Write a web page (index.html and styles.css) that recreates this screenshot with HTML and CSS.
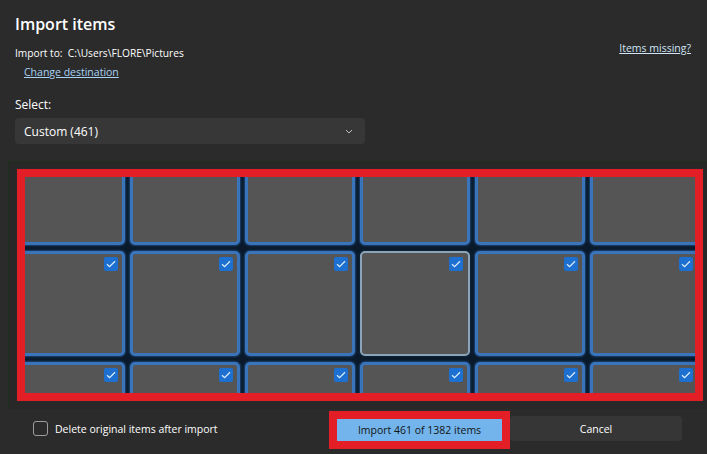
FILE: index.html
```html
<!DOCTYPE html>
<html lang="en">
<head>
    <meta charset="UTF-8">
    <title>Import items</title>
    <link rel="stylesheet" href="styles.css">
</head>
<body>
    <div class="dialog">
        <div class="head">
            <h1 class="title">Import items</h1>

            <div class="dest-row">
                <div class="dest">
                    <p class="import-to">Import to:&nbsp; C:\Users\FLORE\Pictures</p>
                    <a class="link change" href="#">Change destination</a>
                </div>
                <a class="link missing" href="#">Items missing?</a>
            </div>

            <div class="select-label">Select:</div>
            <div class="dropdown">
                <span>Custom (461)</span>
                <svg class="chevron" width="8" height="5" viewBox="0 0 8 5">
                    <path d="M1 1l3 3 3-3" fill="none" stroke="#bdbdbd" stroke-width="1"/>
                </svg>
            </div>
        </div>

        <div class="panel">
            <div class="frame">
                <div class="viewport">
                    <div class="grid" id="grid"></div>
                </div>
            </div>
        </div>

        <div class="footer">
            <label class="keep">
                <span class="box"></span>
                <span>Delete original items after import</span>
            </label>
            <div class="buttons">
                <div class="mark">
                    <button class="btn primary">Import 461 of 1382 items</button>
                </div>
                <button class="btn secondary">Cancel</button>
            </div>
        </div>
    </div>

    <script>
        // 3 rows x 6 columns of selected thumbnails, one in hover state
        const grid = document.getElementById('grid');
        for (let i = 0; i < 18; i++) {
            const tile = document.createElement('div');
            tile.className = 'tile' + (i === 9 ? ' hover' : '');
            tile.innerHTML = '<span class="check"><svg width="10" height="8" viewBox="0 0 10 8">' +
                '<path d="M1 4.2l2.6 2.5L9 1.2" fill="none" stroke="#d8ecff" stroke-width="1.3"/></svg></span>';
            grid.appendChild(tile);
        }
    </script>
</body>
</html>
```

FILE: styles.css
```css
body {
    margin: 0;
    background: #2b2b2b;
    color: #ffffff;
    font-family: "Open Sans", "Noto Sans", sans-serif;
    overflow: hidden;
}
.dialog {
    width: 707px;
    height: 454px;
}
.head {
    padding: 0 16px 0 15px;
}
.title {
    margin: 0;
    padding-top: 10px;
    font-size: 16px;
    line-height: 28px;
    font-weight: 600;
}
.dest-row {
    display: flex;
    justify-content: space-between;
    margin-top: 7px;
}
.import-to {
    margin: 0;
    font-size: 10.2px;
    line-height: 16px;
}
.link {
    color: #a9d3f5;
    font-size: 10.5px;
    line-height: 16px;
    text-decoration: underline;
}
.change {
    display: block;
    margin: 3px 0 0 9px;
}
.missing {
    margin-top: -5px;
    color: #cfe4f6;
}
.select-label {
    margin-top: 17px;
    font-size: 12px;
    line-height: 16px;
}
.dropdown {
    width: 350px;
    height: 26px;
    margin-top: 5px;
    box-sizing: border-box;
    padding: 0 12px 0 9px;
    display: flex;
    align-items: center;
    justify-content: space-between;
    background: #373737;
    border-radius: 4px;
    font-size: 12px;
}
.panel {
    margin: 17px 0 0 8px;
    padding: 7px 0 8px 8px;
    background: #282828;
    border-top: 1px solid #1d301d;
    border-left: 1px solid #1d301d;
}
.frame {
    width: 670px;
    border: 8px solid #e31e26;
}
.viewport {
    height: 216px;
    overflow: hidden;
}
.grid {
    display: grid;
    grid-template-columns: repeat(6, 110px);
    grid-auto-rows: 105px;
    column-gap: 5px;
    row-gap: 6px;
    margin: -37px 0 0 -10px;
    width: 685px;
    background: #0a1a2b;
}
.tile {
    position: relative;
    box-sizing: border-box;
    background: #555555;
    border: 3px solid #3a74bb;
    border-radius: 5px;
    box-shadow: 0 0 2px 1px rgba(46, 104, 176, 0.5);
}
.tile.hover {
    border: 2px solid #8ba4ba;
    box-shadow: 0 0 2px 1px rgba(20, 40, 60, 0.8);
}
.check {
    position: absolute;
    top: 3px;
    right: 4px;
    width: 14px;
    height: 14px;
    border-radius: 2px;
    background: #1d6fd0;
    display: flex;
    align-items: center;
    justify-content: center;
}
.tile.hover .check {
    top: 4px;
    right: 5px;
}
.footer {
    display: flex;
    align-items: flex-start;
    justify-content: space-between;
    height: 44px;
    padding: 0 25px 0 33px;
}
.keep {
    display: flex;
    align-items: center;
    gap: 7px;
    font-size: 10.5px;
    margin-top: 12px;
}
.box {
    width: 13px;
    height: 13px;
    border: 1px solid #9c9c9c;
    border-radius: 3px;
}
.buttons {
    display: flex;
    align-items: flex-start;
}
.mark {
    border: 8px solid #e31e26;
    margin-top: 2px;
}
.btn {
    display: block;
    border: none;
    font-family: inherit;
    font-size: 10.5px;
    padding: 0;
    cursor: pointer;
}
.primary {
    width: 165px;
    height: 22px;
    background: #72b4eb;
    color: #141414;
}
.secondary {
    width: 172px;
    height: 25px;
    margin-top: 7px;
    background: #363636;
    color: #ffffff;
    border-radius: 4px;
}
```
